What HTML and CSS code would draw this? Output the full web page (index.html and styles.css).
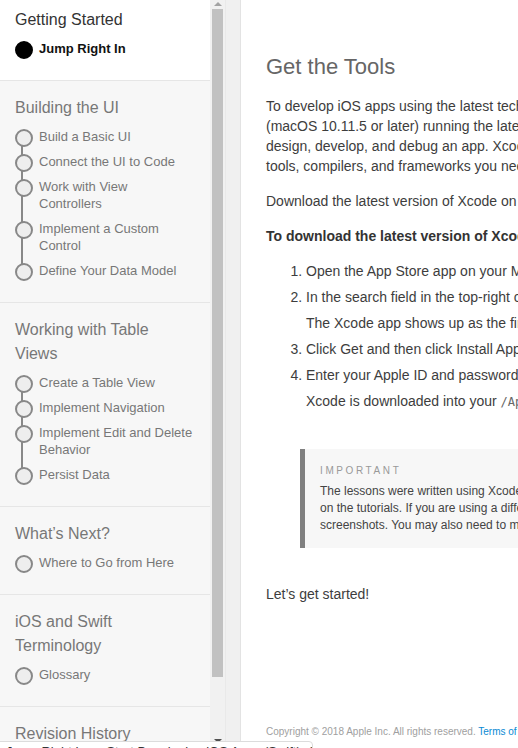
FILE: index.html
```html
<!DOCTYPE html>
<html lang="en">
<head>
<meta charset="utf-8">
<title>Get the Tools</title>
<link rel="stylesheet" href="styles.css">
</head>
<body>
<div class="app">
  <nav class="sidebar">
    <section class="chapter chapter-current">
      <h2 class="chapter-title">Getting Started</h2>
      <ul class="lessons">
        <li class="lesson active">Jump Right In</li>
      </ul>
    </section>
    <section class="chapter">
      <h2 class="chapter-title">Building the UI</h2>
      <ul class="lessons">
        <li class="lesson">Build a Basic UI</li>
        <li class="lesson">Connect the UI to Code</li>
        <li class="lesson">Work with View Controllers</li>
        <li class="lesson">Implement a Custom Control</li>
        <li class="lesson">Define Your Data Model</li>
      </ul>
    </section>
    <section class="chapter">
      <h2 class="chapter-title">Working with Table Views</h2>
      <ul class="lessons">
        <li class="lesson">Create a Table View</li>
        <li class="lesson">Implement Navigation</li>
        <li class="lesson">Implement Edit and Delete Behavior</li>
        <li class="lesson">Persist Data</li>
      </ul>
    </section>
    <section class="chapter">
      <h2 class="chapter-title">What’s Next?</h2>
      <ul class="lessons">
        <li class="lesson">Where to Go from Here</li>
      </ul>
    </section>
    <section class="chapter">
      <h2 class="chapter-title">iOS and Swift Terminology</h2>
      <ul class="lessons">
        <li class="lesson">Glossary</li>
      </ul>
    </section>
    <section class="chapter">
      <h2 class="chapter-title">Revision History</h2>
      <ul class="lessons">
        <li class="lesson">Document Revision History</li>
      </ul>
    </section>
  </nav>
  <div class="scrollbar">
    <div class="arrow arrow-up"></div>
    <div class="thumb"></div>
    <div class="track-rest"></div>
    <div class="arrow arrow-down"></div>
  </div>
  <div class="gutter"></div>
  <main class="main">
    <article class="article">
      <h1 class="article-title">Get the Tools</h1>
      <p class="para">To develop iOS apps using the latest technologies described in these lessons, you need a Mac computer<br>(macOS 10.11.5 or later) running the latest version of Xcode. Xcode includes all the features you need to<br>design, develop, and debug an app. Xcode also contains the iOS SDK, which extends Xcode to include the<br>tools, compilers, and frameworks you need for iOS development specifically.</p>
      <p class="para">Download the latest version of Xcode on your Mac free from the App Store.</p>
      <p class="para strong">To download the latest version of Xcode</p>
      <ol class="steps">
        <li>Open the App Store app on your Mac (by default it’s in the Dock).</li>
        <li>In the search field in the top-right corner, type Xcode and press the Return key.
          <p class="step-note">The Xcode app shows up as the first search result.</p></li>
        <li>Click Get and then click Install App.</li>
        <li>Enter your Apple ID and password when prompted.
          <p class="step-note">Xcode is downloaded into your <code class="code">/Applications</code> directory.</p></li>
      </ol>
      <aside class="note">
        <div class="note-label">IMPORTANT</div>
        <p class="note-text">The lessons were written using Xcode 9.1 and iOS 11.1 SDK, so make sure you use these versions to follow along<br>on the tutorials. If you are using a different version of Xcode, you may notice differences in the UI and in the<br>screenshots. You may also need to make some changes to the code in order for it to compile.</p>
      </aside>
      <p class="para">Let’s get started!</p>
    </article>
    <footer class="footer">Copyright © 2018 Apple Inc. All rights reserved. <a class="footer-link" href="#">Terms of Use</a> | <a class="footer-link" href="#">Privacy Policy</a></footer>
  </main>
</div>
<div class="status">Jump Right In — Start Developing iOS Apps (Swift): Get the Tools and Get Started</div>
</body>
</html>
```

FILE: styles.css
```css
* { box-sizing: border-box; }

html, body {
  margin: 0;
  padding: 0;
  height: 748px;
  overflow: hidden;
  background: #fff;
  font-family: "Liberation Sans", Arial, Helvetica, sans-serif;
}

.app {
  display: flex;
  height: 748px;
}

/* Sidebar */
.sidebar {
  width: 210px;
  flex: none;
  overflow: hidden;
  background: #f7f7f7;
}

.chapter {
  padding: 15px 17px 23px 15px;
  border-bottom: 1px solid #e6e6e6;
  background: #f7f7f7;
}

.chapter-current {
  background: #fff;
  padding-top: 8px;
}

.chapter-title {
  margin: 0;
  font-size: 16px;
  line-height: 24px;
  font-weight: normal;
  color: #777;
}

.chapter-current .chapter-title { color: #333; }

.lessons {
  list-style: none;
  margin: 8px 0 0;
  padding: 0;
  display: flex;
  flex-direction: column;
  gap: 8px;
}

.lesson {
  position: relative;
  padding-left: 24px;
  font-size: 13px;
  line-height: 17px;
  color: #777;
}

.lesson::before {
  content: "";
  position: absolute;
  left: 0;
  top: 1px;
  width: 14px;
  height: 14px;
  border-radius: 50%;
  border: 2px solid #888;
  background: #eee;
  z-index: 1;
}

.lesson:not(:last-child)::after {
  content: "";
  position: absolute;
  left: 6px;
  top: 14px;
  bottom: -10px;
  width: 2px;
  background: #888;
}

.lesson.active {
  font-weight: bold;
  color: #111;
}

.lesson.active::before {
  background: #000;
  border-color: #000;
}

/* Fake scrollbar */
.scrollbar {
  width: 15px;
  flex: none;
  background: #f1f1f1;
  display: flex;
  flex-direction: column;
  align-items: center;
}

.arrow {
  width: 0;
  height: 0;
  border-left: 4px solid transparent;
  border-right: 4px solid transparent;
}

.arrow-up {
  margin: 2px 0 3px;
  border-bottom: 4px solid #a3a3a3;
}

.arrow-down {
  margin: 3px 0 5px;
  border-top: 4px solid #505050;
}

.thumb {
  width: 11px;
  height: 668px;
  background: #c1c1c1;
}

.track-rest { flex: 1; }

.gutter {
  width: 16px;
  flex: none;
  background: #f0f0f0;
  border-left: 1px solid #e9e9e9;
  border-right: 1px solid #e3e3e3;
}

/* Main content */
.main {
  flex: 1;
  min-width: 0;
  overflow: hidden;
  display: flex;
  flex-direction: column;
  padding: 54px 0 10px 25px;
  white-space: nowrap;
}

.article { flex: 1; }

.article-title {
  margin: 0 0 16px;
  font-size: 22px;
  line-height: 26px;
  font-weight: normal;
  color: #666;
}

.para {
  margin: 0 0 15px;
  font-size: 14px;
  line-height: 20px;
  color: #3d3d3d;
}

.strong {
  font-weight: bold;
  color: #333;
}

.steps {
  margin: -3px 0 0;
  padding-left: 40px;
  font-size: 14px;
  line-height: 26px;
  color: #3d3d3d;
}

.step-note {
  margin: 0;
  line-height: 26px;
}

.code {
  font-family: "DejaVu Sans Mono", "Liberation Mono", monospace;
  font-size: 12px;
  color: #666;
}

.note {
  margin: 34px 0 36px 34px;
  padding: 16px 15px 14px;
  background: #f7f7f7;
  border-left: 5px solid #808080;
}

.note-label {
  font-size: 10px;
  line-height: 12px;
  letter-spacing: 2.6px;
  color: #999;
  margin-bottom: 6px;
}

.note-text {
  margin: 0;
  font-size: 12px;
  line-height: 17px;
  color: #444;
}

.footer {
  font-size: 10px;
  line-height: 12px;
  color: #a0a0a0;
}

.footer-link {
  color: #0a8ad4;
  text-decoration: none;
}

/* Status bubble overlay at the bottom edge */
.status {
  position: absolute;
  left: -1px;
  top: 741px;
  width: 314px;
  height: 24px;
  padding: 2px 6px;
  background: #fff;
  border: 1px solid #dcdcdc;
  border-radius: 0 4px 0 0;
  font-size: 13px;
  line-height: 16px;
  color: #333;
  white-space: nowrap;
  overflow: hidden;
}
```
